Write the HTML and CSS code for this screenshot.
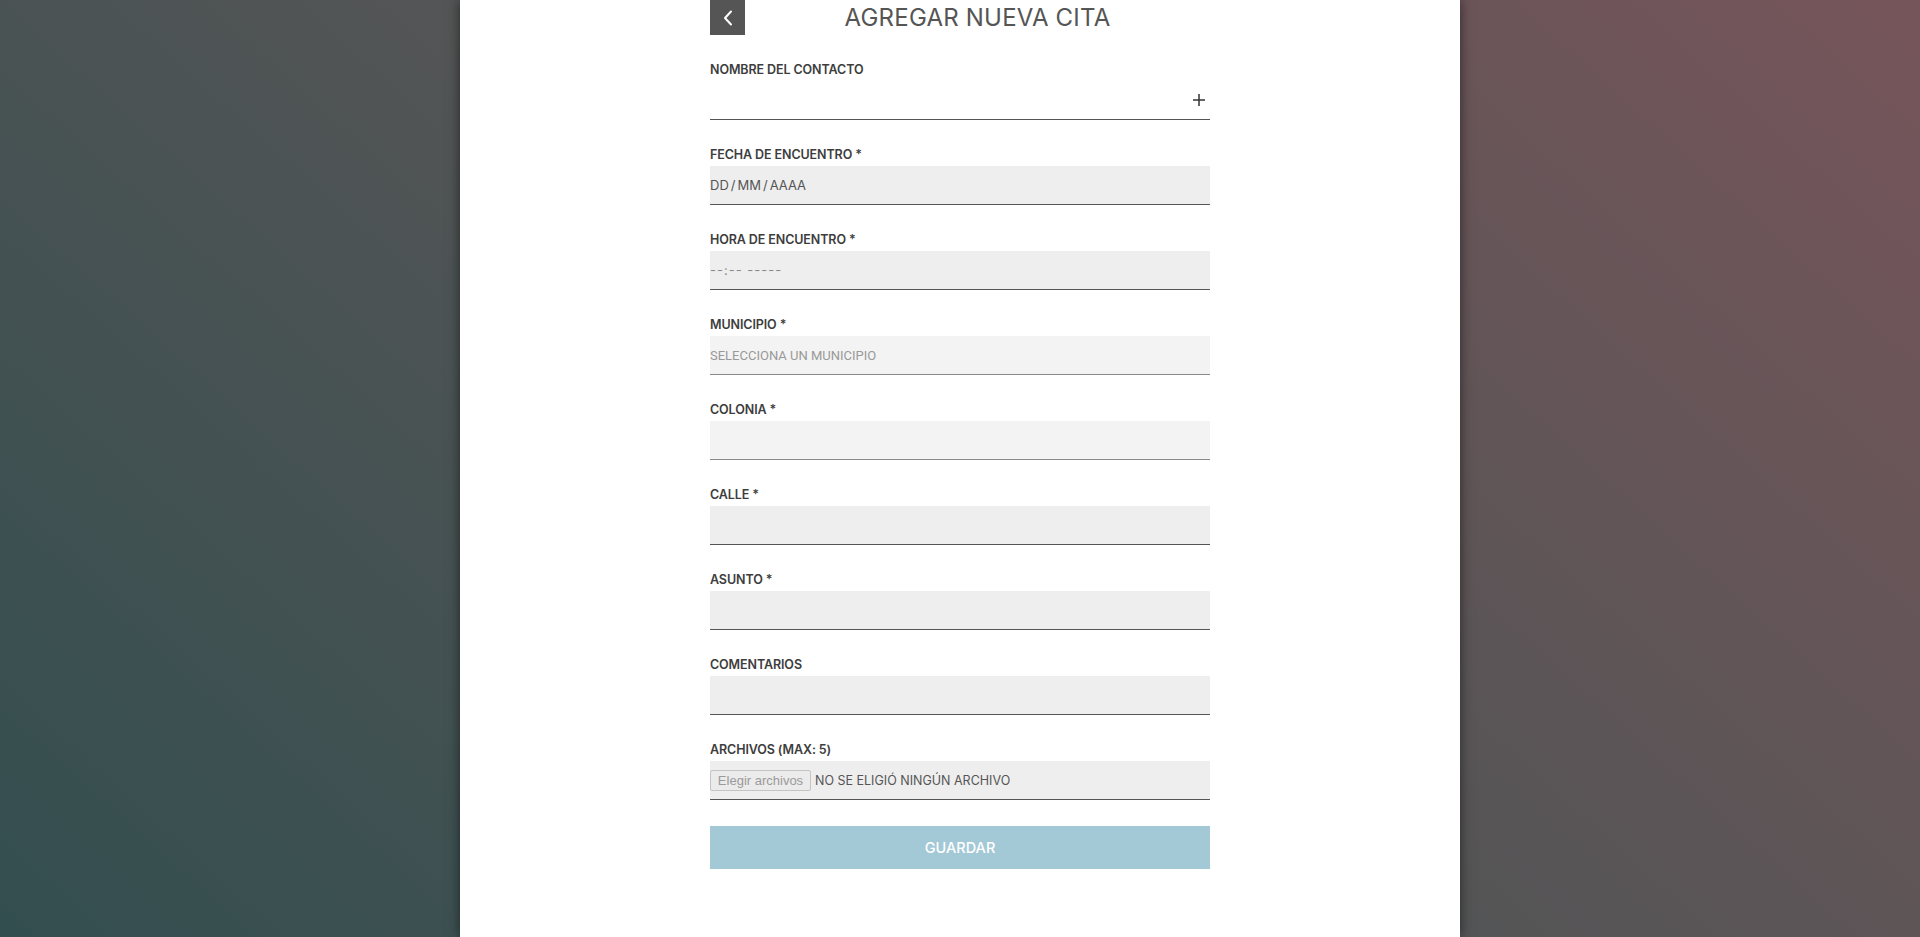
FILE: index.html
```html
<!DOCTYPE html>
<html lang="es">
<head>
<meta charset="utf-8">
<title>Agregar nueva cita</title>
<link rel="stylesheet" href="styles.css">
</head>
<body>
<div class="panel">
  <form class="form">
    <div class="header">
      <button type="button" class="back" aria-label="Regresar">
        <svg width="10" height="16" viewBox="0 0 10 16"><path d="M8 1.5 L2 8 L8 14.5" fill="none" stroke="#fff" stroke-width="2" stroke-linecap="round" stroke-linejoin="round"/></svg>
      </button>
      <h1 class="title">AGREGAR NUEVA CITA</h1>
    </div>

    <div class="field">
      <div class="label">NOMBRE DEL CONTACTO</div>
      <div class="control plain">
        <span class="plus"><svg width="12" height="12" viewBox="0 0 12 12"><path d="M6 0 V12 M0 6 H12" stroke="#333" stroke-width="1.5"/></svg></span>
      </div>
    </div>

    <div class="field">
      <div class="label">FECHA DE ENCUENTRO *</div>
      <div class="control dark"><span class="val date">DD<span class="sep">/</span>MM<span class="sep">/</span>AAAA</span></div>
    </div>

    <div class="field">
      <div class="label">HORA DE ENCUENTRO *</div>
      <div class="control dark"><span class="val time">--:-- -----</span></div>
    </div>

    <div class="field">
      <div class="label">MUNICIPIO *</div>
      <div class="control light"><span class="val placeholder">SELECCIONA UN MUNICIPIO</span></div>
    </div>

    <div class="field">
      <div class="label">COLONIA *</div>
      <div class="control light"></div>
    </div>

    <div class="field">
      <div class="label">CALLE *</div>
      <div class="control dark"></div>
    </div>

    <div class="field">
      <div class="label">ASUNTO *</div>
      <div class="control dark"></div>
    </div>

    <div class="field">
      <div class="label">COMENTARIOS</div>
      <div class="control dark"></div>
    </div>

    <div class="field">
      <div class="label">ARCHIVOS (MAX: 5)</div>
      <div class="control dark">
        <span class="filebtn">Elegir archivos</span>
        <span class="filetext">NO SE ELIGIÓ NINGÚN ARCHIVO</span>
      </div>
    </div>

    <button type="button" class="save">GUARDAR</button>
  </form>
</div>
</body>
</html>
```

FILE: styles.css
```css
html, body {
  margin: 0;
  padding: 0;
  height: 100%;
}
body {
  background: linear-gradient(42deg, #334e4f 0%, #545556 50%, #76555a 100%);
  font-family: "Inter", "Liberation Sans", sans-serif;
  overflow: hidden;
}
.panel {
  width: 1000px;
  min-height: 937px;
  margin: 0 auto;
  background: #fff;
  box-shadow: 0 0 12px rgba(0, 0, 0, 0.55);
}
.form {
  width: 500px;
  margin: 0 auto;
  display: flex;
  flex-direction: column;
}
.header {
  display: flex;
  align-items: center;
  height: 35px;
}
.back {
  width: 35px;
  height: 35px;
  border: 0;
  padding: 0;
  background: #555;
  display: flex;
  align-items: center;
  justify-content: center;
  cursor: pointer;
}
.title {
  flex: 1;
  margin: 0;
  text-align: center;
  font-size: 24px;
  font-weight: 400;
  color: #555;
  letter-spacing: 0.2px;
}
.field {
  margin-top: 27px;
  display: flex;
  flex-direction: column;
}
.label {
  height: 16px;
  line-height: 16px;
  font-size: 12.5px;
  font-weight: 600;
  color: #3d3d3d;
  letter-spacing: -0.1px;
  margin-bottom: 3px;
}
.control {
  height: 38px;
  border-bottom: 1px solid #555;
  display: flex;
  align-items: center;
  box-sizing: content-box;
}
.control.plain {
  background: #fff;
  justify-content: flex-end;
}
.control.dark {
  background: #eee;
}
.control.light {
  background: #f3f3f3;
  border-bottom-color: #8a8a8a;
}
.plus {
  display: flex;
  margin-right: 5px;
}
.val {
  font-size: 13px;
  color: #555;
}
.sep {
  padding: 0 2px;
}
.time {
  color: #8a8a8a;
  letter-spacing: 1px;
}
.placeholder {
  font-family: "Roboto", "Liberation Sans", sans-serif;
  color: #999;
  font-size: 13px;
}
.filebtn {
  box-sizing: border-box;
  width: 101px;
  height: 21px;
  line-height: 19px;
  border: 1px solid #c4c4c4;
  border-radius: 2px;
  background: #ebebeb;
  color: #9a9a9a;
  font-family: "Liberation Sans", Arial, sans-serif;
  font-size: 13px;
  text-align: center;
}
.filetext {
  margin-left: 4px;
  font-size: 12.5px;
  color: #555;
}
.save {
  margin-top: 26px;
  height: 43px;
  border: 0;
  background: #a3c8d6;
  color: #fff;
  font-family: "Inter", "Liberation Sans", sans-serif;
  font-size: 14.5px;
  font-weight: 500;
  cursor: pointer;
}
```
